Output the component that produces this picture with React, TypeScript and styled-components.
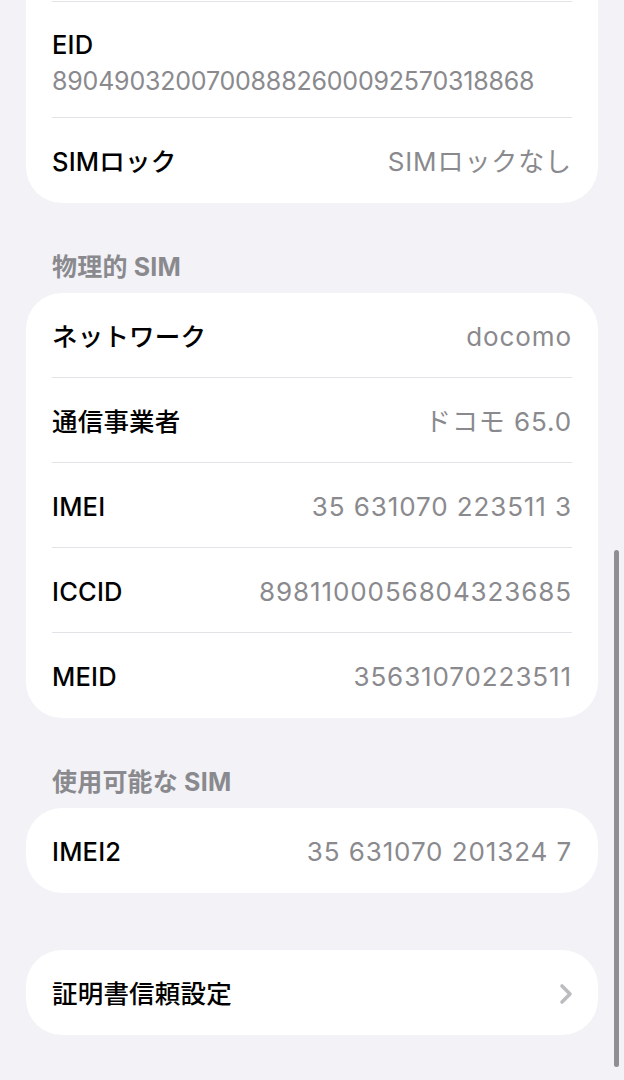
import styled, { createGlobalStyle } from 'styled-components';

const GlobalStyle = createGlobalStyle`
  html, body {
    margin: 0;
    padding: 0;
    background: #f2f2f7;
  }
  body {
    font-family: Inter, "Noto Sans CJK JP", "Noto Sans", sans-serif;
    -webkit-font-smoothing: antialiased;
  }
`;

const Page = styled.div`
  position: relative;
  width: 624px;
  height: 1080px;
  overflow: hidden;
  background: #f2f2f7;
  padding: 0 26px;
  box-sizing: border-box;
  display: flex;
  flex-direction: column;
`;

const Card = styled.div<{ $cut?: boolean; $gap?: number }>`
  background: #fff;
  border-radius: ${(p) => (p.$cut ? '0 0 36px 36px' : '36px')};
  margin-top: ${(p) => p.$gap ?? 0}px;
  padding-top: ${(p) => (p.$cut ? '1px' : '0')};
  overflow: hidden;
`;

const SectionHeader = styled.div`
  margin: 50px 0 12px;
  padding-left: 26px;
  font-size: 25px;
  line-height: 28px;
  font-weight: 700;
  color: #8a8a8e;
  letter-spacing: 0.2px;
`;

const Row = styled.div`
  padding: 0 26px;
  &:last-child > div {
    border-bottom: none;
  }
`;

const RowInner = styled.div<{ $top?: boolean }>`
  display: flex;
  align-items: center;
  justify-content: space-between;
  min-height: 85px;
  padding-top: 3px;
  box-sizing: border-box;
  border-bottom: 1px solid #e3e3e7;
  border-top: ${(p) => (p.$top ? '1px solid #e3e3e7' : 'none')};
`;

const StackInner = styled(RowInner)`
  flex-direction: column;
  align-items: flex-start;
  justify-content: flex-start;
  gap: 6px;
  min-height: 117px;
  padding-top: 28px;
`;

const Label = styled.span`
  font-size: 25.5px;
  line-height: 30px;
  font-weight: 500;
  color: #000;
  letter-spacing: 0.2px;
`;

const Value = styled.span<{ $small?: boolean }>`
  font-size: ${(p) => (p.$small ? '25px' : '26px')};
  line-height: 30px;
  font-weight: 400;
  color: #8a8a8e;
  letter-spacing: ${(p) => (p.$small ? '-0.2px' : '0.9px')};
`;

const Chevron = styled.svg`
  width: 14px;
  height: 22px;
  margin-right: -1px;
`;

const ScrollBar = styled.div`
  position: absolute;
  right: 5px;
  top: 550px;
  width: 5px;
  height: 517px;
  border-radius: 3px;
  background: #8e8e93;
`;

type Item = { label: string; value: string };

const physical: Item[] = [
  { label: 'ネットワーク', value: 'docomo' },
  { label: '通信事業者', value: 'ドコモ 65.0' },
  { label: 'IMEI', value: '35 631070 223511 3' },
  { label: 'ICCID', value: '8981100056804323685' },
  { label: 'MEID', value: '35631070223511' },
];

function InfoRow({ label, value }: Item) {
  return (
    <Row>
      <RowInner>
        <Label>{label}</Label>
        <Value>{value}</Value>
      </RowInner>
    </Row>
  );
}

export default function App() {
  return (
    <>
      <GlobalStyle />
      <Page>
        <Card $cut>
          <Row>
            <StackInner $top>
              <Label>EID</Label>
              <Value $small>89049032007008882600092570318868</Value>
            </StackInner>
          </Row>
          <InfoRow label="SIMロック" value="SIMロックなし" />
        </Card>

        <SectionHeader>物理的 SIM</SectionHeader>
        <Card>
          {physical.map((item) => (
            <InfoRow key={item.label} {...item} />
          ))}
        </Card>

        <SectionHeader>使用可能な SIM</SectionHeader>
        <Card>
          <InfoRow label="IMEI2" value="35 631070 201324 7" />
        </Card>

        <Card $gap={57}>
          <Row>
            <RowInner>
              <Label>証明書信頼設定</Label>
              <Chevron viewBox="0 0 14 22">
                <path
                  d="M3 3 L11 11 L3 19"
                  fill="none"
                  stroke="#bcbcc0"
                  strokeWidth="3.6"
                  strokeLinecap="round"
                  strokeLinejoin="round"
                />
              </Chevron>
            </RowInner>
          </Row>
        </Card>
        <ScrollBar />
      </Page>
    </>
  );
}
